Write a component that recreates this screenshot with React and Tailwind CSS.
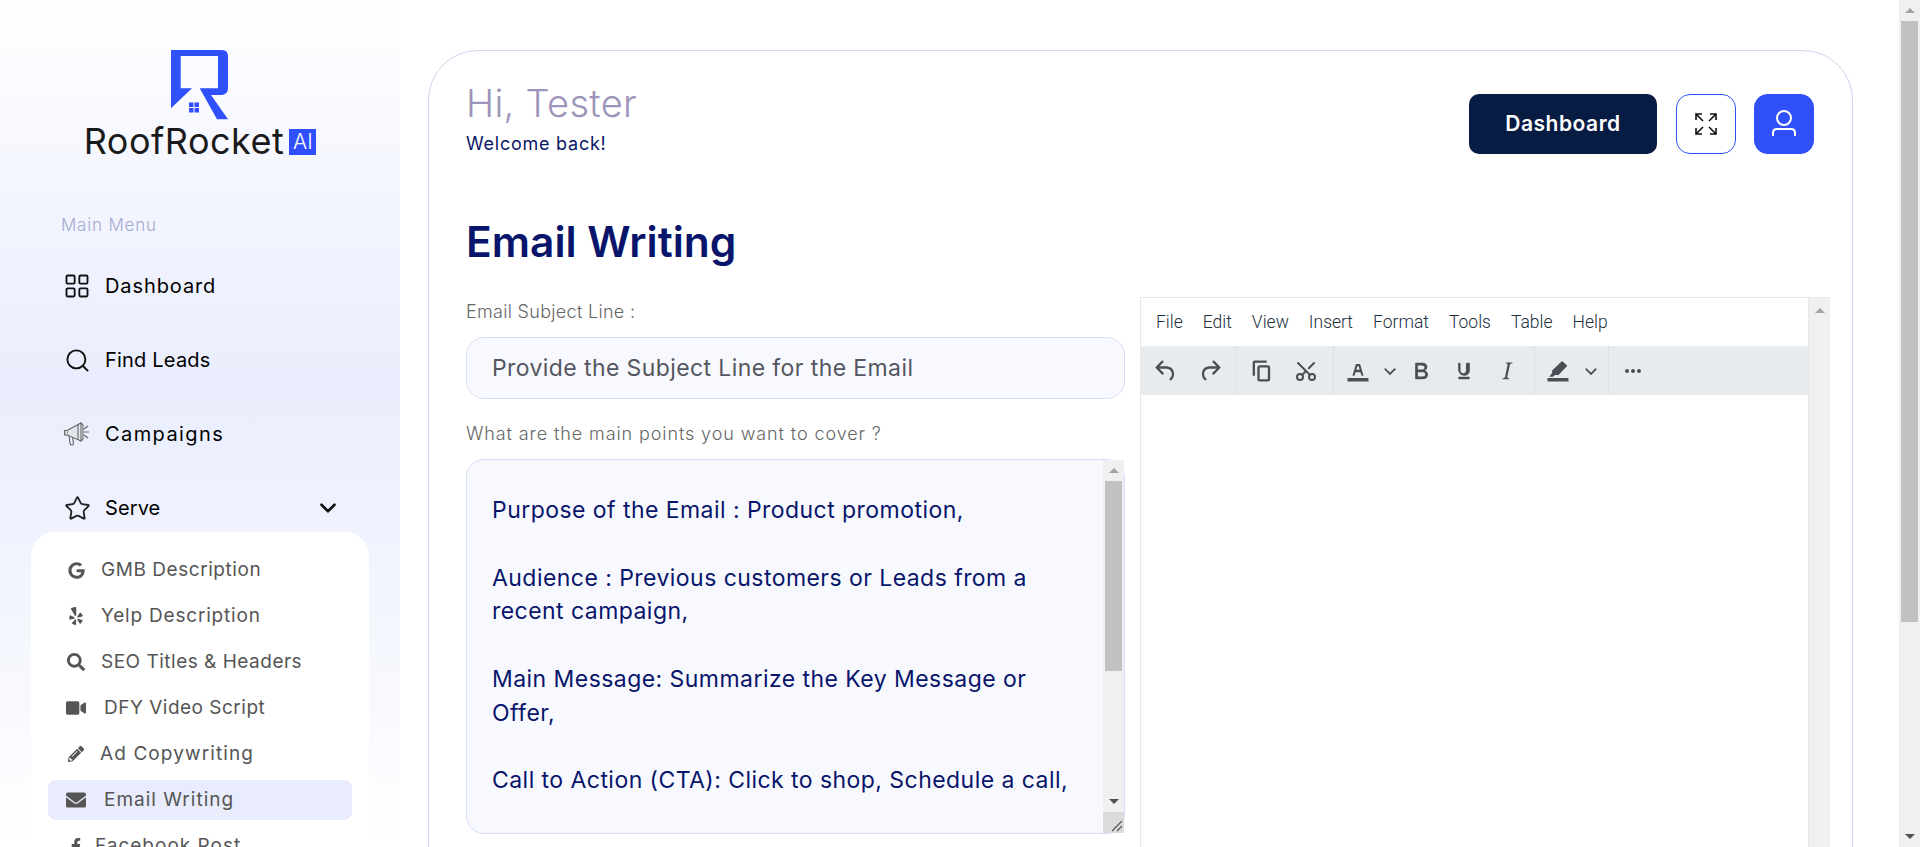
import React from 'react';
import { ChevronDown, LayoutGrid, Search, Star, Scissors } from 'lucide-react';
import { FaGoogle, FaYelp, FaSearch, FaVideo, FaPencilAlt, FaEnvelope, FaFacebookF } from 'react-icons/fa';

const sans = "font-['Inter','Noto_Sans',sans-serif]";

function Logo() {
  return (
    <div className="flex flex-col items-center">
      <svg width="58" height="70" viewBox="0 0 58 70">
        <path fill="#2f50fb" d="M0 0V58.3L21 38.3H9.7V6H47V38.3H28.7L46 69.3H57L40 45H50Q57 45 57 38V6Q57 0 51 0Z" />
        <g fill="#2f50fb">
          <rect x="18" y="52.5" width="4.5" height="4.5" />
          <rect x="23.5" y="52.5" width="4.5" height="4.5" />
          <rect x="18" y="58" width="4.5" height="4.5" />
          <rect x="23.5" y="58" width="4.5" height="4.5" />
        </g>
      </svg>
      <div className="flex items-center mt-[8px] h-[27px]">
        <span className="text-[36px] leading-[27px] text-[#1a1a1a] tracking-[0.5px]">RoofRocket</span>
        <span className="ml-[5px] w-[27px] h-[26px] bg-[#2f50fb] text-white text-[21px] font-light leading-[26px] text-center">AI</span>
      </div>
    </div>
  );
}

function MegaphoneIcon() {
  return (
    <svg width="28" height="26" viewBox="0 0 28 26" fill="none" stroke="#666" strokeWidth="1.1">
      <path d="M4 9.5L18 2V20L4 14Z" fill="#e4e6ee" />
      <path d="M15 3.5V18.5M18 2L20 4V18L18 20" />
      <path d="M4 9.5H1.5V14H4" fill="#d4d6de" />
      <path d="M6 14.5L7 22.5Q7.6 24 9 24Q10.6 24 10.4 22.5L9.6 16" />
      <path d="M21 11H26M21 8L25 5M21 14L25 17" />
    </svg>
  );
}

function NavItem({ icon, label, track, right }) {
  return (
    <div className="flex items-center h-[74px] pl-[61px] pr-[59px]">
      <div className="w-[32px] flex justify-center">{icon}</div>
      <span className={`ml-[12px] text-[20px] text-black ${track}`}>{label}</span>
      {right && <div className="ml-auto">{right}</div>}
    </div>
  );
}

const subItems = [
  { icon: <FaGoogle size={17} />, label: 'GMB Description', gap: 'ml-[15px] tracking-[0.55px]' },
  { icon: <FaYelp size={18} />, label: 'Yelp Description', gap: 'ml-[15px] tracking-[0.8px]' },
  { icon: <FaSearch size={18} />, label: 'SEO Titles & Headers', gap: 'ml-[15px] tracking-[0.5px]' },
  { icon: <FaVideo size={20} />, label: 'DFY Video Script', gap: 'ml-[18px] tracking-[0.5px]' },
  { icon: <FaPencilAlt size={16} />, label: 'Ad Copywriting', gap: 'ml-[14px] tracking-[1.1px]' },
  { icon: <FaEnvelope size={20} />, label: 'Email Writing', gap: 'ml-[18px] tracking-[1px]', active: true },
  { icon: <FaFacebookF size={16} />, label: 'Facebook Post', gap: 'ml-[9px] tracking-[1px]' },
];

function Sidebar() {
  return (
    <aside className="w-[400px] shrink-0 h-full overflow-hidden bg-gradient-to-b from-white via-[#e9edfd] via-45% to-white pt-[50px]">
      <Logo />
      <div className="mt-[58px] pl-[61px] text-[17px] leading-[24px] font-light text-[#a4abd0] tracking-[0.8px]">Main Menu</div>
      <div className="mt-[12px]">
        <NavItem icon={<LayoutGrid size={28} strokeWidth={1.6} color="#111" />} label="Dashboard" track="tracking-[0.9px]" />
        <NavItem icon={<Search size={27} strokeWidth={1.7} color="#111" />} label="Find Leads" track="tracking-[0.2px]" />
        <NavItem icon={<MegaphoneIcon />} label="Campaigns" track="tracking-[1.4px]" />
        <NavItem
          icon={<Star size={27} strokeWidth={1.6} color="#222" />}
          label="Serve"
          track="tracking-[0.1px]"
          right={<ChevronDown size={26} strokeWidth={2.4} color="#111" />}
        />
      </div>
      <div className="mt-[-13px] mx-[31px] bg-white rounded-[24px] px-[17px] pt-[18px] pb-[20px]">
        {subItems.map((item) => (
          <div
            key={item.label}
            className={`flex items-center h-[40px] mb-[6px] pl-[18px] rounded-[8px] text-[#555] ${item.active ? 'bg-[#e9ecfc]' : ''}`}
          >
            <div className="w-[20px] flex justify-center shrink-0">{item.icon}</div>
            <span className={`${item.gap} text-[19px]`}>{item.label}</span>
          </div>
        ))}
      </div>
    </aside>
  );
}

function Tiny({ d, size = 28 }) {
  return (
    <svg width={size} height={size} viewBox="0 0 24 24" fill="#4a4f55">
      <path d={d} />
    </svg>
  );
}

function Chevron() {
  return (
    <svg width="14" height="14" viewBox="0 0 12 12" fill="none" stroke="#4a4f55" strokeWidth="1.5">
      <path d="M1.5 4L6 8.5L10.5 4" />
    </svg>
  );
}

const icons = {
  undo: 'M6.4 8H12c3.7 0 6.2 2 6.8 5.1.6 2.7-.4 5.6-2.3 6.8a1 1 0 0 1-1-1.8c1.1-.6 1.8-2.7 1.4-4.6-.5-2.1-2.1-3.5-4.9-3.5H6.4l3.3 3.3a1 1 0 1 1-1.4 1.4l-5-5a1 1 0 0 1 0-1.4l5-5a1 1 0 0 1 1.4 1.4L6.4 8Z',
  redo: 'M17.6 8H12c-3.7 0-6.2 2-6.8 5.1-.6 2.7.4 5.6 2.3 6.8a1 1 0 0 0 1-1.8c-1.1-.6-1.8-2.7-1.4-4.6.5-2.1 2.1-3.5 4.9-3.5h5.6l-3.3 3.3a1 1 0 1 0 1.4 1.4l5-5a1 1 0 0 0 0-1.4l-5-5a1 1 0 0 0-1.4 1.4L17.6 8Z',
  copy: 'M16 3H6a2 2 0 0 0-2 2v11h2V5h10V3Zm1 4a2 2 0 0 1 2 2v10a2 2 0 0 1-2 2H10a2 2 0 0 1-2-2V9c0-1.2.9-2 2-2h7Zm0 12V9h-7v10h7Z',
  textColor: 'M3 18h18v3H3zM8.7 16h-.8a.5.5 0 0 1-.5-.6l2.7-9c.1-.3.3-.4.5-.4h2.8c.2 0 .4.1.5.4l2.7 9a.5.5 0 0 1-.5.6h-.8a.5.5 0 0 1-.4-.4l-.7-2.2c0-.2-.3-.4-.5-.4h-3.4c-.2 0-.4.2-.5.4l-.7 2.2c0 .2-.2.4-.4.4Zm2.6-7.6-.6 2a.5.5 0 0 0 .5.6h1.6a.5.5 0 0 0 .5-.6l-.6-2c0-.3-.3-.4-.5-.4h-.4c-.2 0-.4.1-.5.4Z',
  bold: 'M7.8 19c-.3 0-.5 0-.6-.2l-.2-.5V5.7c0-.2 0-.4.2-.5l.6-.2h5c1.5 0 2.7.3 3.5 1 .7.6 1.1 1.4 1.1 2.5a3 3 0 0 1-.6 1.9c-.4.6-1 1-1.6 1.2.4.1.9.3 1.3.6s.8.7 1 1.2c.4.4.5 1 .5 1.6 0 1.3-.4 2.3-1.3 3-.8.7-2.1 1-3.8 1H7.8Zm5-8.3c.6 0 1.2-.1 1.6-.5.4-.3.6-.7.6-1.3 0-1.1-.8-1.7-2.3-1.7H9.3v3.5h3.4Zm.5 6c.7 0 1.3-.1 1.7-.4.4-.4.6-.9.6-1.5s-.2-1-.7-1.4c-.4-.3-1-.4-2-.4H9.4v3.8h4Z',
  underline: 'M16 5c.6 0 1 .4 1 1v5.5a4 4 0 0 1-.4 1.8l-1 1.4a5.3 5.3 0 0 1-5.5 1 4 4 0 0 1-2.2-2.4A5 5 0 0 1 7 11.5V6c0-.6.4-1 1-1s1 .4 1 1v5.5c0 .3 0 .6.2 1 0 .3.2.6.4.8l.8.5.9.2h.1c.3 0 .6 0 .9-.2l.8-.5c.2-.2.3-.5.4-.8l.2-1V6c0-.6.4-1 1-1h.2ZM8 17h8c.6 0 1 .4 1 1s-.4 1-1 1H8a1 1 0 0 1 0-2Z',
  italic: 'M16.7 4.7l-.1.9h-.3c-.6 0-1 0-1.4.3-.3.3-.4.6-.5 1.1l-2.1 9.8v.6c0 .5.4.8 1.4.8h.2l-.2.8H8l.2-.8h.2c1.1 0 1.8-.5 2-1.5l2-9.8.1-.5c0-.6-.4-.8-1.4-.8h-.3l.2-.9h5.8Z',
  highlight: 'M3 18h18v3H3zM15.5 3.5L20 7.5 12.5 15.5H9.5L7.5 17H4.5L7 13.5V11.5Z',
  more: 'M6 10a2 2 0 0 0-2 2c0 1.1.9 2 2 2a2 2 0 0 0 2-2 2 2 0 0 0-2-2Zm12 0a2 2 0 0 0-2 2c0 1.1.9 2 2 2a2 2 0 0 0 2-2 2 2 0 0 0-2-2Zm-6 0a2 2 0 0 0-2 2c0 1.1.9 2 2 2a2 2 0 0 0 2-2 2 2 0 0 0-2-2Z',
};

function ToolBtn({ children, w = 'w-[44px]' }) {
  return <div className={`${w} shrink-0 h-full flex items-center justify-center`}>{children}</div>;
}

function ArrowUp() {
  return <div className="w-0 h-0 border-x-[5px] border-x-transparent border-b-[5px] border-b-[#a3a3a3]" />;
}

function ArrowDown() {
  return <div className="w-0 h-0 border-x-[5px] border-x-transparent border-t-[5px] border-t-[#505050]" />;
}

function Editor() {
  return (
    <div className="w-[690px] ml-[15px] flex shrink-0 border-l border-t border-[#e8e8e8] h-[600px]">
      <div className="flex-1 min-w-0">
        <div className="h-[48px] flex items-center pl-[15px] pt-[1px] gap-[20px] font-['Roboto',sans-serif] font-light text-[17.5px] text-[#222f3e]">
          {['File', 'Edit', 'View', 'Insert', 'Format', 'Tools', 'Table', 'Help'].map((m) => (
            <span key={m}>{m}</span>
          ))}
        </div>
        <div className="h-[49px] bg-[#e8ebee] flex items-stretch">
          <div className="flex items-center pl-[3px] border-r border-[#dcdfe3] w-[96px]">
            <ToolBtn><Tiny d={icons.undo} /></ToolBtn>
            <ToolBtn><Tiny d={icons.redo} /></ToolBtn>
          </div>
          <div className="flex items-center pl-[3px] border-r border-[#dcdfe3] w-[97px]">
            <ToolBtn><Tiny d={icons.copy} /></ToolBtn>
            <ToolBtn><Scissors size={24} strokeWidth={2} color="#4a4f55" className="-rotate-90" /></ToolBtn>
          </div>
          <div className="flex items-center border-r border-[#dcdfe3] w-[201px]">
            <ToolBtn w="w-[48px]"><Tiny d={icons.textColor} /></ToolBtn>
            <ToolBtn w="w-[16px]"><Chevron /></ToolBtn>
            <ToolBtn w="w-[46px]"><Tiny d={icons.bold} /></ToolBtn>
            <ToolBtn w="w-[40px]"><Tiny d={icons.underline} /></ToolBtn>
            <ToolBtn w="w-[46px]"><Tiny d={icons.italic} /></ToolBtn>
          </div>
          <div className="flex items-center border-r border-[#dcdfe3] w-[74px]">
            <ToolBtn w="w-[46px]"><Tiny d={icons.highlight} /></ToolBtn>
            <ToolBtn w="w-[20px]"><Chevron /></ToolBtn>
          </div>
          <ToolBtn w="w-[48px]"><Tiny d={icons.more} size={24} /></ToolBtn>
        </div>
      </div>
      <div className="w-[22px] bg-[#f0f0f0] border-l border-[#e8e8e8] flex justify-center pt-[10px]">
        <ArrowUp />
      </div>
    </div>
  );
}

function Fields() {
  return (
    <div className="w-[659px] shrink-0">
      <div className="text-[18px] leading-[24px] font-light text-[#666] tracking-[0.3px] mt-[3px]">Email Subject Line :</div>
      <div className="mt-[13px] h-[62px] bg-[#f8f9fe] border border-[#d8def8] rounded-[18px] flex items-center pl-[25px] text-[23px] text-[#55565f] tracking-[0.4px]">
        Provide the Subject Line for the Email
      </div>
      <div className="mt-[23px] text-[18px] leading-[24px] font-light text-[#666] tracking-[0.9px]">What are the main points you want to cover ?</div>
      <div className="mt-[13px] h-[375px] bg-[#f8f9fe] border border-[#d8def8] rounded-[18px] flex">
        <div className="flex-1 pl-[25px] pt-[34px] text-[23px] leading-[33.8px] text-[#08156b] tracking-[0.45px] whitespace-pre-line">
          {`Purpose of the Email : Product promotion,

Audience : Previous customers or Leads from a
recent campaign,

Main Message: Summarize the Key Message or
Offer,

Call to Action (CTA): Click to shop, Schedule a call,`}
        </div>
        <div className="w-[21px] bg-[#f0f0f0] flex flex-col items-center">
          <div className="h-[21px] flex items-center justify-center"><ArrowUp /></div>
          <div className="w-[17px] h-[190px] bg-[#c1c1c1]" />
          <div className="flex-1" />
          <div className="h-[21px] flex items-center justify-center"><ArrowDown /></div>
          <div className="w-full h-[21px] bg-[#dcdcdc] flex items-end justify-end pr-[1px] pb-[1px]">
            <svg width="12" height="12" viewBox="0 0 12 12" stroke="#555" strokeWidth="1.2">
              <path d="M1 11L11 1M6 11L11 6" />
            </svg>
          </div>
        </div>
      </div>
    </div>
  );
}

export default function App() {
  return (
    <div className={`${sans} flex h-screen overflow-hidden bg-white`}>
      <Sidebar />
      <main className="flex-1 min-w-0 h-full overflow-hidden pl-[28px] pr-[46px] pt-[50px]">
        <div className="h-[900px] border border-[#d6d3ee] rounded-t-[50px] pl-[37px] pr-[22px] pt-[29px]">
          <div className="flex justify-between">
            <div>
              <div className="text-[38px] leading-[46px] font-light text-[#9c94b9] tracking-[0.3px]">Hi, Tester</div>
              <div className="text-[18px] leading-[24px] mt-[6px] text-[#0a1766] tracking-[0.75px]">Welcome back!</div>
            </div>
            <div className="flex gap-[19px] pt-[14px] pr-[16px]">
              <button className="w-[188px] h-[60px] rounded-[10px] bg-[#071c42] text-white text-[21px] font-semibold tracking-[0.5px]">Dashboard</button>
              <button className="w-[60px] h-[60px] rounded-[14px] bg-white border border-[#3052f5] flex items-center justify-center">
                <svg width="22" height="22" viewBox="0 0 22 22" fill="none" stroke="#111" strokeWidth="1.6">
                  <path d="M1 7V1H7M1 1L8 8M15 1H21V7M21 1L14 8M1 15V21H7M1 21L8 14M15 21H21V15M21 21L14 14" />
                </svg>
              </button>
              <button className="w-[60px] h-[60px] ml-[-1px] rounded-[14px] bg-[#2f50fb] flex items-center justify-center">
                <svg width="26" height="28" viewBox="0 0 26 28" fill="none" stroke="white" strokeWidth="2">
                  <circle cx="13" cy="8" r="7" />
                  <path d="M2 26V23Q2 19 6 19H20Q24 19 24 23V26" />
                </svg>
              </button>
            </div>
          </div>
          <h1 className="mt-[60px] text-[42.5px] leading-[52px] font-semibold text-[#08156b]">Email Writing</h1>
          <div className="flex mt-[29px]">
            <Fields />
            <Editor />
          </div>
        </div>
      </main>
      <div className="w-[21px] shrink-0 bg-[#f0f0f0] flex flex-col items-center">
        <div className="h-[21px] flex items-center justify-center"><ArrowUp /></div>
        <div className="w-[17px] h-[601px] bg-[#c1c1c1]" />
        <div className="flex-1" />
        <div className="h-[21px] flex items-center justify-center"><ArrowDown /></div>
      </div>
    </div>
  );
}
